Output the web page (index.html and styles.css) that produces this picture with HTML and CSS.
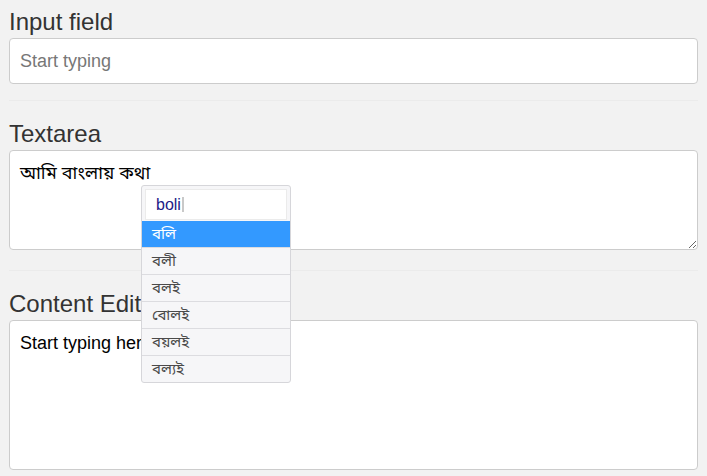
FILE: index.html
```html
<!DOCTYPE html>
<html lang="en">
<head>
<meta charset="utf-8">
<title>Bengali input</title>
<link rel="stylesheet" href="styles.css">
</head>
<body>
<div class="page">
  <section class="section first">
    <h3 class="label">Input field</h3>
    <input class="field" type="text" placeholder="Start typing">
  </section>
  <section class="section mid">
    <h3 class="label">Textarea</h3>
    <textarea class="field area">আমি বাংলায় কথা</textarea>
  </section>
  <section class="section last">
    <h3 class="label">Content Editable</h3>
    <div class="field editable" contenteditable="true">Start typing here</div>
  </section>

  <div class="suggest">
    <div class="suggest-head">
      <div class="suggest-input"><span class="typed">boli</span><span class="caret"></span></div>
    </div>
    <ul class="suggest-list">
      <li class="item active">বলি</li>
      <li class="item">বলী</li>
      <li class="item">বলই</li>
      <li class="item">বোলই</li>
      <li class="item">বয়লই</li>
      <li class="item">বল্যই</li>
    </ul>
  </div>
</div>
</body>
</html>
```

FILE: styles.css
```css
html, body {
  margin: 0;
  padding: 0;
  background: #f2f2f2;
}
body {
  font-family: "Liberation Sans", Arial, "Noto Sans Bengali", "Lohit Bengali", "FreeSans", sans-serif;
  color: #333;
}
.page {
  position: relative;
  padding: 0 9px;
}
.section {
  padding: 20px 0 16px;
  border-bottom: 1px solid #ebebeb;
}
.section.first {
  padding-top: 9px;
}
.section.mid {
  padding-bottom: 20px;
}
.section.last {
  border-bottom: none;
  padding-bottom: 6px;
}
.label {
  margin: 0 0 3px;
  font-size: 24px;
  line-height: 26px;
  font-weight: normal;
  color: #333;
}
.field {
  display: block;
  box-sizing: border-box;
  width: 100%;
  margin: 0;
  border: 1px solid #ccc;
  border-radius: 4px;
  background: #fff;
  padding: 10px;
  font-family: "Liberation Sans", Arial, "Noto Sans Bengali", "Lohit Bengali", "FreeSans", sans-serif;
  font-size: 18px;
  line-height: 24px;
  color: #000;
  outline: none;
}
input.field {
  height: 46px;
}
input.field::placeholder {
  color: #777;
}
.area {
  height: 100px;
  resize: vertical;
}
.editable {
  height: 150px;
}
.suggest {
  position: absolute;
  left: 141px;
  top: 185px;
  width: 150px;
  box-sizing: border-box;
  border: 1px solid #d6d6da;
  border-radius: 3px;
  background: #f6f6f8;
  overflow: hidden;
}
.suggest-head {
  padding: 3px 3px 1px;
}
.suggest-input {
  box-sizing: border-box;
  height: 31px;
  border: 1px solid #ebebeb;
  background: #fff;
  padding: 0 0 0 10px;
  display: flex;
  align-items: center;
}
.typed {
  font-size: 16px;
  line-height: 20px;
  color: #231a86;
}
.caret {
  display: inline-block;
  width: 2px;
  height: 15px;
  margin-left: 1px;
  background: #c9c9c9;
}
.suggest-list {
  list-style: none;
  margin: 0;
  padding: 0;
}
.item {
  height: 26px;
  line-height: 26px;
  padding-left: 10px;
  font-size: 15px;
  color: #4a4a4a;
  border-top: 1px solid #dcdce0;
}
.item:first-child {
  border-top: none;
}
.item.active {
  background: #3399ff;
  color: #fff;
}
```
